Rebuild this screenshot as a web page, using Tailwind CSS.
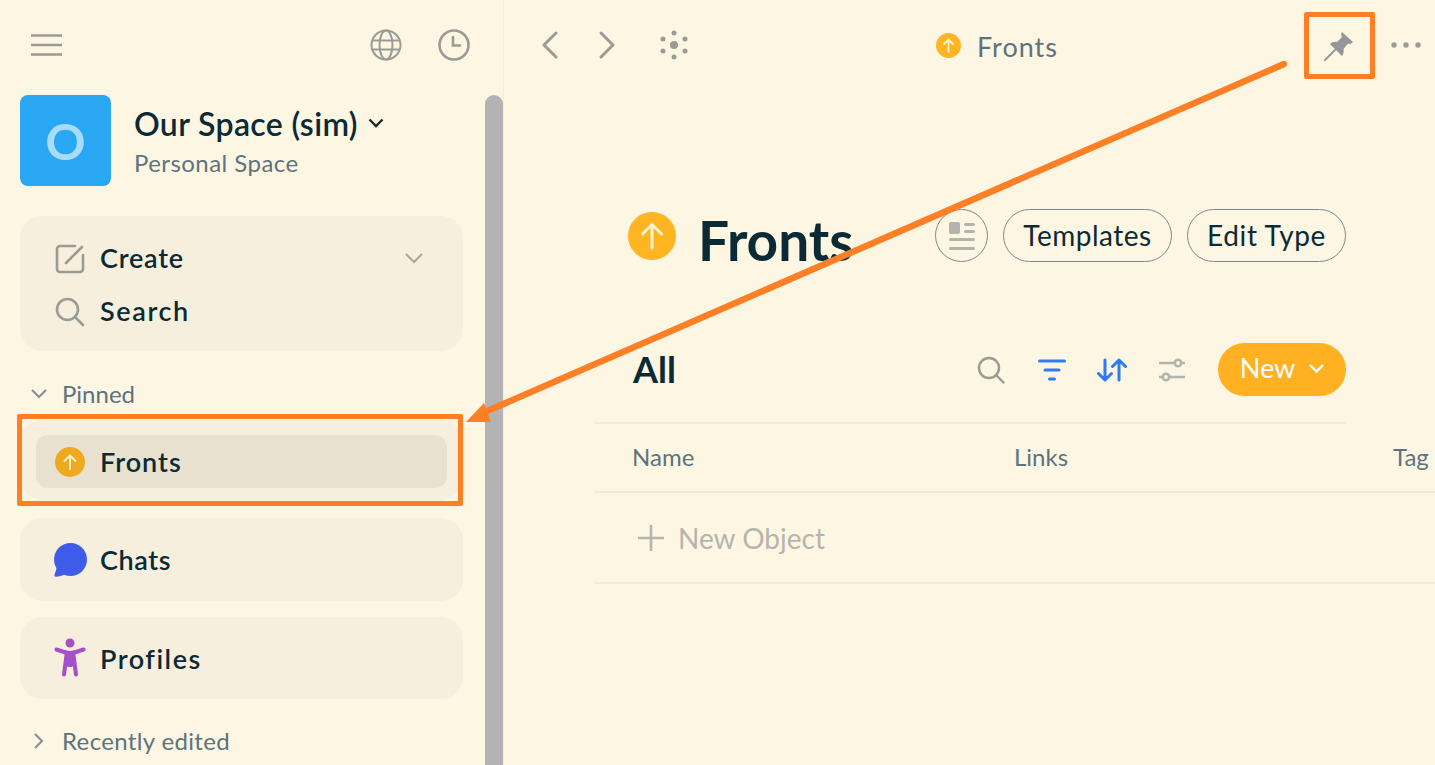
<!DOCTYPE html>
<html lang="en">
<head>
  <meta charset="UTF-8" />
  <title>Fronts</title>
  <script src="https://cdn.jsdelivr.net/npm/@tailwindcss/browser@4"></script>
</head>
<body class="bg-[#fdf6e3] text-[#0b2a35] font-['Lato',sans-serif] overflow-hidden">
<div class="relative flex w-[1435px] h-[765px] overflow-hidden">

  <!-- Sidebar -->
  <aside class="flex w-[504px] h-full shrink-0 border-r border-[#f5eedc]">
    <div class="w-[485px] pl-[20px] pr-[22px]">
      <div class="h-[95px] flex items-center justify-between pb-[5px] pl-[11px]">
        <svg class="w-[31px] h-[24px]" viewBox="0 0 31 24" fill="none" stroke="#9b9b96" stroke-width="2.6"><path d="M0 2.5h31M0 12h31M0 21.500h31"/></svg>
        <div class="flex items-center gap-[36px] mr-[-7px]">
          <svg class="w-[32px] h-[32px]" viewBox="0 0 32 32" fill="none" stroke="#9b9b96" stroke-width="2"><circle cx="16" cy="16" r="14.500"/><ellipse cx="16" cy="16" rx="6.500" ry="14.500"/><path d="M2 11.500h28M2 20.500h28"/></svg>
          <svg class="w-[32px] h-[32px]" viewBox="0 0 32 32" fill="none" stroke="#9b9b96" stroke-width="2.600" stroke-linecap="round"><circle cx="16" cy="16" r="14.500"/><path d="M15 8v8.500h7"/></svg>
        </div>
      </div>

      <div class="flex items-center h-[91px] gap-[24px]">
        <div class="w-[91px] h-[91px] rounded-[8px] bg-[#2aa7f2] flex items-center justify-center text-[#a8dcff] text-[50px] font-bold leading-none">O</div>
        <div class="-ml-px translate-y-[1px]">
          <div class="flex items-center gap-[10px]">
            <span class="text-[32px] leading-[38px] font-semibold tracking-[0.35px]">Our Space (sim)</span>
            <svg class="w-[16px] h-[10px] mb-[2px]" viewBox="0 0 16 10" fill="none" stroke="#1f2a2e" stroke-width="2.400"><path d="M1.500 1.500 8 8l6.500-6.500"/></svg>
          </div>
          <div class="text-[24px] leading-[30px] text-[#5d737e] mt-[5px] tracking-[0.45px]">Personal Space</div>
        </div>
      </div>

      <div class="mt-[30px] h-[135px] rounded-[22px] bg-[#f6efdd] pt-[16px] pl-[35px] pr-[40px]">
        <div class="flex items-center h-[53px] gap-[14px]">
          <svg class="w-[31px] h-[31px]" viewBox="0 0 31 31" fill="none" stroke="#9b9b96" stroke-width="2.600" stroke-linecap="round"><path d="M20 3H5a3 3 0 0 0-3 3v20a3 3 0 0 0 3 3h20a3 3 0 0 0 3-3V12"/><path d="M11 20 27 4"/></svg>
          <span class="text-[27px] font-semibold flex-1 tracking-[0.8px]">Create</span>
          <svg class="w-[18px] h-[11px]" viewBox="0 0 18 11" fill="none" stroke="#a9a9a2" stroke-width="2"><path d="M1 1l8 8 8-8"/></svg>
        </div>
        <div class="flex items-center h-[53px] gap-[15px]">
          <svg class="w-[30px] h-[30px]" viewBox="0 0 30 30" fill="none" stroke="#9b9b96" stroke-width="2.600" stroke-linecap="round"><circle cx="12.500" cy="12.500" r="10.500"/><path d="m20 20 8 8"/></svg>
          <span class="text-[27px] font-semibold tracking-[1.6px]">Search</span>
        </div>
      </div>

      <div class="mt-[27px] h-[32px] flex items-center gap-[15px] pl-[11px] text-[24px] text-[#5d737e]">
        <svg class="w-[16px] h-[10px]" viewBox="0 0 16 10" fill="none" stroke="#8a9296" stroke-width="2.200"><path d="M1 1l7 7 7-7"/></svg>
        <span>Pinned</span>
      </div>

      <div class="mt-[10px] h-[80px] rounded-[22px] bg-[#f6efdd] px-[16px] pt-[15px]">
        <div class="h-[53px] rounded-[12px] bg-[#e8e1d0] flex items-center pl-[19px] gap-[15px]">
          <svg class="w-[30px] h-[30px]" viewBox="0 0 30 30"><circle cx="15" cy="15" r="15" fill="#efa91f"/><path d="M15 22V9M9.500 14 15 8.500l5.500 5.500" fill="none" stroke="#fbeecb" stroke-width="2" stroke-linecap="round"/></svg>
          <span class="text-[27px] font-semibold tracking-[1px] translate-y-[1px]">Fronts</span>
        </div>
      </div>

      <div class="mt-[18px] h-[83px] rounded-[22px] bg-[#f6efdd] flex items-center pl-[33px] gap-[13px]">
        <svg class="w-[34px] h-[34px]" viewBox="0 0 34 34"><circle cx="17.500" cy="16.500" r="16.500" fill="#3f5bea"/><path d="M4 24 1.500 32c-.3 1 .3 1.800 1.300 1.700 3-.2 6.500-1 9.200-2.500z" fill="#3f5bea"/></svg>
        <span class="text-[27px] font-semibold tracking-[0.6px] translate-y-[1px]">Chats</span>
      </div>

      <div class="mt-[16px] h-[82px] rounded-[22px] bg-[#f6efdd] flex items-center pl-[34px] gap-[14px]">
        <svg class="w-[32px] h-[40px]" viewBox="0 0 32 40"><circle cx="16" cy="5" r="4.500" fill="#a64fc9"/><path d="M2.500 11.500Q12 15 16 15T29.500 11.500M12.500 17 10 36.500M19.500 17 22 36.500" fill="none" stroke="#a64fc9" stroke-width="4" stroke-linecap="round" stroke-linejoin="round"/><path d="M11 14h10v12l-3 3h-4l-3-3z" fill="#a64fc9"/></svg>
        <span class="text-[27px] font-semibold tracking-[1.5px] translate-y-[1px]">Profiles</span>
      </div>

      <div class="mt-[26px] h-[32px] flex items-center gap-[19px] pl-[14px] text-[24px] text-[#5d737e]">
        <svg class="w-[10px] h-[16px]" viewBox="0 0 10 16" fill="none" stroke="#8a9296" stroke-width="2.200"><path d="M1 1l7 7-7 7"/></svg>
        <span class="-ml-px tracking-[0.35px]">Recently edited</span>
      </div>
    </div>
    <div class="w-[18px] mt-[95px] rounded-t-[9px] bg-[#b3b3b3]"></div>
  </aside>

  <!-- Main -->
  <main class="flex-1 min-w-0">
    <div class="relative h-[90px] flex items-center pl-[37px] pr-[14px]">
      <svg class="w-[18px] h-[28px]" viewBox="0 0 18 28" fill="none" stroke="#9b9b96" stroke-width="3" stroke-linecap="round" stroke-linejoin="round"><path d="M15 2 3 14l12 12"/></svg>
      <svg class="w-[18px] h-[28px] ml-[39px]" viewBox="0 0 18 28" fill="none" stroke="#9b9b96" stroke-width="3" stroke-linecap="round" stroke-linejoin="round"><path d="M3 2l12 12L3 26"/></svg>
      <svg class="w-[30px] h-[30px] ml-[43px]" viewBox="0 0 30 30" fill="#9b9b96"><circle cx="15" cy="15" r="4"/><circle cx="15" cy="3" r="2.500"/><circle cx="15" cy="27" r="2.500"/><circle cx="4" cy="9" r="2.500"/><circle cx="26" cy="9" r="2.500"/><circle cx="4" cy="21" r="2.500"/><circle cx="26" cy="21" r="2.500"/></svg>
      <div class="flex items-center gap-[16px] ml-[247px]">
        <svg class="w-[25px] h-[25px]" viewBox="0 0 25 25"><circle cx="12.500" cy="12.500" r="12.500" fill="#ffb522"/><path d="M12.500 19V7M8 11l4.500-4.500L17 11" fill="none" stroke="#fdf2d0" stroke-width="1.800" stroke-linecap="round"/></svg>
        <span class="text-[27px] text-[#5d737e] tracking-[1px] translate-y-[2px]">Fronts</span>
      </div>
      <div class="flex-1"></div>
      <svg class="w-[30px] h-[30px] mr-[37px] translate-y-[1px]" viewBox="0 0 30 30" fill="#96969a"><path d="M18 1 29 11l-2.500 2-2.500-.500-4.500 5.500c.5 3 0 5-1.500 7L6 13c2-2 4.500-2.500 7-2l5-5-1-2.500z"/><path d="M11 19 1 29" stroke="#96969a" stroke-width="2" stroke-linecap="round"/></svg>
      <svg class="w-[30px] h-[6px]" viewBox="0 0 30 6" fill="#9b9b96"><circle cx="3" cy="3" r="2.700"/><circle cx="15" cy="3" r="2.700"/><circle cx="27" cy="3" r="2.700"/></svg>
    </div>

    <div class="pl-[91px]">
      <div class="w-[751px]">
        <div class="flex items-center h-[53px] mt-[119px] pl-[33px]">
          <svg class="w-[48px] h-[48px]" viewBox="0 0 48 48"><circle cx="24" cy="24" r="24" fill="#ffb522"/><path d="M24 36V13M14.500 22 24 12.500l9.500 9.500" fill="none" stroke="#fdf2d0" stroke-width="3" stroke-linecap="round"/></svg>
          <span class="text-[55px] font-bold ml-[22px] leading-none translate-y-[5px]">Fronts</span>
          <div class="flex-1"></div>
          <div class="w-[53px] h-[53px] rounded-full border border-[#7d8a8c] flex items-center justify-center">
            <svg class="w-[28px] h-[32px]" viewBox="0 0 28 32" fill="#b4b4ae"><rect x="1" y="2" width="11" height="12" rx="2"/><rect x="16" y="3" width="11" height="3" rx="1.500"/><rect x="16" y="10" width="11" height="3" rx="1.500"/><rect x="1" y="18" width="26" height="3" rx="1.500"/><rect x="1" y="27" width="26" height="3" rx="1.500"/></svg>
          </div>
          <div class="ml-[15px] h-[53px] w-[169px] rounded-full border border-[#7d8a8c] flex items-center justify-center text-[28px] tracking-[0.5px] pb-[2px]">Templates</div>
          <div class="ml-[15px] h-[53px] w-[159px] rounded-full border border-[#7d8a8c] flex items-center justify-center text-[28px] tracking-[0.6px] pb-[2px]">Edit Type</div>
        </div>

        <div class="flex items-center h-[53px] mt-[81px] pl-[38px]">
          <span class="text-[36px] font-bold flex-1 -translate-y-px">All</span>
          <svg class="w-[28px] h-[28px]" viewBox="0 0 28 28" fill="none" stroke="#9b9b96" stroke-width="2.400" stroke-linecap="round"><circle cx="12" cy="12" r="10"/><path d="m19 19 7.500 7.500"/></svg>
          <svg class="w-[28px] h-[22px] ml-[33px]" viewBox="0 0 28 22" fill="none" stroke="#2f7bf6" stroke-width="3" stroke-linecap="round"><path d="M1.500 2h25M7 11h14M11.500 20h5"/></svg>
          <svg class="w-[30px] h-[24px] ml-[31px]" viewBox="0 0 30 24" fill="none" stroke="#2f7bf6" stroke-width="3" stroke-linecap="round" stroke-linejoin="round"><path d="M8 2v20M1.500 15.500 8 22l6.500-6.500M22 22V2M15.500 8.500 22 2l6.500 6.500"/></svg>
          <svg class="w-[28px] h-[26px] ml-[31px]" viewBox="0 0 28 26" fill="none" stroke="#b4b4ae" stroke-width="2.600"><path d="M1 6h16M23 6h4M1 20h4M11 20h16"/><circle cx="20" cy="6" r="3.200"/><circle cx="8" cy="20" r="3.200"/></svg>
          <div class="ml-[32px] w-[128px] h-[53px] rounded-full bg-[#ffb122] flex items-center justify-center gap-[14px] text-white text-[27px] pb-[2px]">
            <span>New</span>
            <svg class="w-[15px] h-[9px]" viewBox="0 0 15 9" fill="none" stroke="#fff" stroke-width="2.400"><path d="M1 1l6.500 6.500L14 1"/></svg>
          </div>
        </div>
        <div class="mt-[26px] h-[2px] bg-[#f1ead8]"></div>
      </div>

      <div class="relative flex items-center h-[69px] pl-[37px] pb-[2px] text-[24px] text-[#5d737e] border-b-2 border-[#f1ead8]">
        <span class="w-[382px]">Name</span>
        <span class="w-[379px]">Links</span>
        <span>Tag</span>
      </div>
      <div class="flex items-center h-[91px] pl-[43px] gap-[14px] text-[28px] text-[#b5b5ae] border-b-2 border-[#f1ead8]">
        <svg class="w-[26px] h-[26px]" viewBox="0 0 26 26" fill="none" stroke="#b5b5ae" stroke-width="2.600"><path d="M13 0v26M0 13h26"/></svg>
        <span>New Object</span>
      </div>
    </div>
  </main>

  <!-- Annotation overlay -->
  <div class="absolute left-[17px] top-[414px] w-[446px] h-[92px] border-[5px] border-[#ff7f27] rounded-[2px]"></div>
  <div class="absolute left-[1304px] top-[12px] w-[71px] h-[67px] border-[5px] border-[#ff7f27] rounded-[2px]"></div>
  <svg class="absolute left-0 top-0 w-[1435px] h-[765px] pointer-events-none" viewBox="0 0 1435 765"><path d="M1284 64 485 412" stroke="#ff7f27" stroke-width="6.500" stroke-linecap="round"/><path d="M466 422 484 403 491 422z" fill="#ff7f27"/></svg>
</div>
</body>
</html>
